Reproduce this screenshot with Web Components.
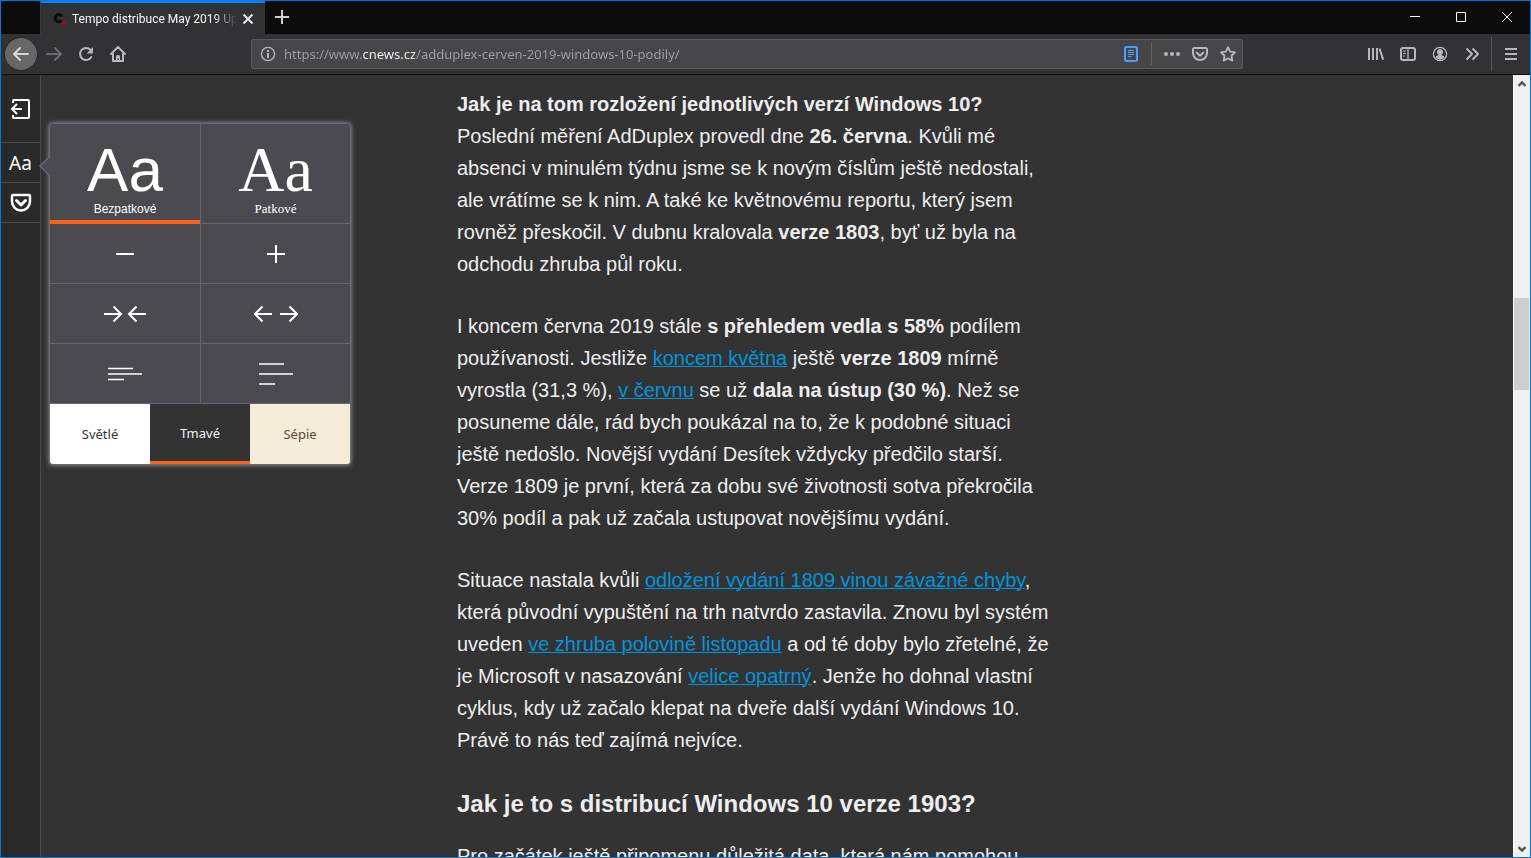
<!DOCTYPE html>
<html lang="cs">
<head>
<meta charset="utf-8">
<title>Tempo distribuce May 2019 Update</title>
<style>
body { margin: 0; background: #333; font-family: "Noto Sans", "Open Sans", sans-serif; }
</style>
</head>
<body>
<browser-window>
  <tab-strip slot="tabs"><browser-tab>Tempo distribuce May 2019 Update</browser-tab></tab-strip>
  <nav-toolbar slot="toolbar"></nav-toolbar>
  <reader-sidebar slot="content"></reader-sidebar>
  <reader-article slot="content"></reader-article>
  <page-scrollbar slot="content"></page-scrollbar>
</browser-window>

<script>
const define = (name, html, setup) => {
  const template = document.createElement('template');
  template.innerHTML = '<style>*{box-sizing:border-box}</style>' + html;
  customElements.define(name, class extends HTMLElement {
    constructor() {
      super();
      this.attachShadow({ mode: 'open' }).append(template.content.cloneNode(true));
    }
    connectedCallback() { if (setup) setup(this, this.shadowRoot); }
  });
};

const line = (w, body, extra = '') => `<g fill="none" stroke="currentColor" stroke-width="${w}" ${extra}>${body}</g>`;
const round = 'stroke-linecap="round" stroke-linejoin="round"';
const ICONS = {
  back: [16, 16, line(2, '<path d="M15 8H1.5M7 2L1 8l6 6"/>', round)],
  forward: [16, 16, line(2, '<path d="M1 8h13.5M9 2l6 6-6 6"/>', round)],
  reload: [16, 16, line(2, '<path d="M13.3 11A6 6 0 1 1 12.6 4"/>', 'stroke-linecap="round"') + '<path d="M15 1v6.5H8.6z" fill="currentColor"/>'],
  home: [16, 16, line(2, '<path d="M1 8l7-7 7 7M3 8v7h10V8"/>', round) + '<path d="M6 15v-4.5a1.5 1.5 0 0 1 1.5-1.5h1A1.5 1.5 0 0 1 10 10.500V15H8.700v-2.500H7.500V15z" fill="currentColor"/>'],
  info: [16, 16, line(1.3, '<circle cx="8" cy="8" r="6.600"/>') + '<path d="M7 7h2v5H7zM7 4h2v2H7z" fill="currentColor"/>'],
  reader: [16, 16, line(2, '<rect x="2" y="1" width="12" height="14" rx="1.500"/>') + line(1, '<path d="M5 4.500h6M5 6.500h6M5 8.500h6M5 10.500h3.500"/>')],
  dots: [18, 16, '<g fill="currentColor"><circle cx="3" cy="8" r="2"/><circle cx="9" cy="8" r="2"/><circle cx="15" cy="8" r="2"/></g>'],
  pocket: [16, 16, line(2, '<path d="M2.500 2h11a1.500 1.500 0 0 1 1.500 1.500V7A7 7 0 0 1 1 7V3.500A1.500 1.500 0 0 1 2.500 2zM4.700 6.500L8 9.700l3.300-3.200"/>', round)],
  star: [16, 16, line(1.8, '<path d="M8 1.200l2.100 4.400 4.900.7-3.500 3.400.8 4.900L8 12.300l-4.300 2.300.8-4.900L1 6.300l4.900-.7z"/>', 'stroke-linejoin="round"')],
  library: [16, 16, line(2, '<path d="M1 2v12M5 2v12M9 2v12M11.500 2.500l3.700 11.300"/>')],
  sidebar: [16, 16, line(2, '<rect x="1" y="2" width="14" height="12" rx="2"/><path d="M8 2v12" stroke-width="1.300"/><path d="M3 5h3M3 7.500h3M3 10h2" stroke-width="1"/>')],
  account: [16, 16, line(1.3, '<circle cx="8" cy="8" r="6.600"/>') + '<path d="M8 3a3 3 0 0 1 1.800 5.400V9.500c2.200.2 2.700 1 2.700 1.800A5.500 5.500 0 0 1 3.500 11.300c0-.8.500-1.600 2.700-1.800V8.400A3 3 0 0 1 8 3z" fill="currentColor"/>'],
  overflow: [16, 16, line(2, '<path d="M2.500 2.500L8 8l-5.500 5.500M8.500 2.500L14 8l-5.500 5.500"/>', 'stroke-linejoin="round"')],
  menu: [16, 16, line(2, '<path d="M2 3h12M2 8h12M2 13h12"/>')],
  plus: [14, 14, line(2, '<path d="M7 0v14M0 7h14"/>')],
  cross: [12, 12, line(2, '<path d="M1.500 1.500l9 9M10.500 1.500l-9 9"/>')],
  minimize: [10, 10, '<path d="M0 4h10v1H0z" fill="currentColor"/>'],
  maximize: [10, 10, line(1, '<path d="M.5.5h9v9h-9z"/>')],
  quit: [10, 10, line(1, '<path d="M0 0l10 10M10 0L0 10"/>')],
  exit: [22, 22, line(2, '<path d="M3 5V3a1 1 0 0 1 1-1h14a1 1 0 0 1 1 1v16a1 1 0 0 1-1 1H4a1 1 0 0 1-1-1v-2M12 11H2M7 6l-5 5 5 5"/>')],
  pocketLarge: [22, 20, line(2.500, '<path d="M3 2h16a1 1 0 0 1 1 1v5.500a9 9 0 0 1-18 0V3a1 1 0 0 1 1-1z"/><path d="M6.500 7.500L11 12l4.500-4.500" stroke-width="3"/>', round)],
  smaller: [18, 18, line(2, '<path d="M0 9h18"/>')],
  larger: [18, 18, line(2, '<path d="M0 9h18M9 0v18"/>')],
  narrower: [42, 18, line(2, '<path d="M0 9h17M9.500 1.500L17 9l-7.500 7.500M42 9H25M32.500 1.500L25 9l7.500 7.500"/>')],
  wider: [44, 18, line(2, '<path d="M18 9H1M8.500 1.500L1 9l7.500 7.500M26 9h17M35.500 1.500L43 9l-7.500 7.500"/>')],
  denser: [34, 22, line(1.6, '<path d="M0 5.500h25M0 11h34M0 16.500h16"/>')],
  looser: [34, 22, line(1.6, '<path d="M0 1h25M0 11h34M0 21h16"/>')],
  up: [8, 8, line(2.4, '<path d="M.5 6L4 2.500 7.500 6"/>')],
  down: [8, 8, line(2.4, '<path d="M.5 2L4 5.500 7.500 2"/>')]
};

define('ui-icon', '<style>:host{display:flex;flex:none}svg{display:block}</style>', (host, root) => {
  const [w, h, body] = ICONS[host.getAttribute('name')];
  const box = document.createElement('div');
  box.innerHTML = `<svg width="${w}" height="${h}" viewBox="0 0 ${w} ${h}" aria-hidden="true">${body}</svg>`;
  root.append(box);
});

define('tool-button', `
<style>
:host { display: flex; flex: none; width: 32px; height: 32px; color: #b8b8b9; }
button { display: flex; align-items: center; justify-content: center; width: 100%; height: 100%; padding: 0; border: 0; border-radius: inherit; background: none; color: inherit; font: inherit; }
</style>
<button type="button"><slot></slot></button>`, (host, root) => {
  root.querySelector('button').setAttribute('aria-label', host.getAttribute('label'));
});

define('browser-window', `
<style>
:host { display: flex; flex-direction: column; height: 100vh; box-sizing: border-box; border: 1px solid #0078d7; background: #333; overflow: hidden; }
main { display: flex; flex: 1; min-height: 0; }
</style>
<slot name="tabs"></slot><slot name="toolbar"></slot>
<main><slot name="content"></slot></main>`);

define('tab-strip', `
<style>
:host { display: flex; flex: none; height: 33px; box-sizing: border-box; background: #0c0c0d; border-bottom: 1px solid #09090a; padding-left: 39px; }
.gap { flex: 1; }
.win { width: 46px; color: #fff; }
.new { width: 34px; color: #d0d0d0; }
::slotted(browser-tab) { margin-bottom: -1px; }
</style>
<slot></slot>
<tool-button class="new" label="Nový panel"><ui-icon name="plus"></ui-icon></tool-button>
<span class="gap"></span>
<tool-button class="win" label="Minimalizovat"><ui-icon name="minimize"></ui-icon></tool-button>
<tool-button class="win" label="Maximalizovat"><ui-icon name="maximize"></ui-icon></tool-button>
<tool-button class="win" label="Zavřít"><ui-icon name="quit"></ui-icon></tool-button>`);

define('browser-tab', `
<style>
:host { display: flex; align-items: center; box-sizing: border-box; width: 225px; background: #323234; border-top: 2px solid #0a84ff; border-left: 1px solid #3c3c3e; padding: 0 11px; color: #f9f9fa; font: 12px Roboto, "Noto Sans", sans-serif; }
svg { flex: none; margin-right: 5px; }
.title { flex: 1; overflow: hidden; white-space: nowrap; line-height: 18px; -webkit-mask-image: linear-gradient(to left, transparent, #000 24px); mask-image: linear-gradient(to left, transparent, #000 24px); }
.close { width: 12px; height: 18px; color: #e6e6e6; margin-left: 5px; }
</style>
<svg width="15" height="14" viewBox="0 0 15 14" aria-hidden="true"><path d="M10 4.500A3.600 3.600 0 1 0 9.500 8.500" fill="none" stroke="#0c0c0d" stroke-width="3"/><circle cx="12" cy="11" r="2.300" fill="#a3071c"/></svg>
<span class="title"><slot></slot></span>
<tool-button class="close" label="Zavřít panel"><ui-icon name="cross"></ui-icon></tool-button>`);

define('nav-toolbar', `
<style>
:host { display: flex; align-items: center; flex: none; height: 41px; box-sizing: border-box; background: #323234; border-bottom: 1px solid #0c0c0d; padding: 0 3px 0 4px; }
.back { margin-right: 1px; border-radius: 50%; background: #676768; color: #d8d8d9; box-shadow: 0 0 0 1px #29292b; }
.off { color: #6c6c6e; }
.group { display: flex; }
address-bar { flex: 1; margin: 0 117px; }
.sep { width: 1px; height: 34px; background: #555557; margin: 0 3px; }
</style>
<div class="group">
<tool-button class="back" label="Zpět"><ui-icon name="back"></ui-icon></tool-button>
<tool-button class="off" label="Vpřed"><ui-icon name="forward"></ui-icon></tool-button>
<tool-button label="Obnovit"><ui-icon name="reload"></ui-icon></tool-button>
<tool-button label="Domů"><ui-icon name="home"></ui-icon></tool-button>
</div>
<address-bar></address-bar>
<div class="group">
<tool-button label="Knihovna"><ui-icon name="library"></ui-icon></tool-button>
<tool-button label="Postranní lišta"><ui-icon name="sidebar"></ui-icon></tool-button>
<tool-button label="Účet"><ui-icon name="account"></ui-icon></tool-button>
<tool-button label="Další nástroje"><ui-icon name="overflow"></ui-icon></tool-button>
</div>
<span class="sep"></span>
<tool-button label="Nabídka"><ui-icon name="menu"></ui-icon></tool-button>`);

define('address-bar', `
<style>
:host { display: flex; align-items: center; box-sizing: border-box; height: 30px; min-width: 0; background: #474749; border: 1px solid #5a5a5c; border-radius: 2px; }
tool-button { width: 28px; height: 28px; }
.info { width: 32px; }
.reader { color: #45a1ff; }
.sep { width: 1px; height: 22px; background: #626264; margin: 0 6px; }
input { flex: 1; min-width: 0; height: 28px; padding: 0; border: 0; outline: 0; font: 13px/28px "Noto Sans", "Open Sans", sans-serif;
  color: #a0a0a2; -webkit-text-fill-color: transparent;
  background: linear-gradient(to right, #a0a0a2 78px, #f9f9fa 78px 131px, #a0a0a2 131px); -webkit-background-clip: text; background-clip: text; }
</style>
<tool-button class="info" label="Informace o stránce"><ui-icon name="info"></ui-icon></tool-button>
<input type="text" aria-label="Adresa" value="https://www.cnews.cz/adduplex-cerven-2019-windows-10-podily/">
<tool-button class="reader" label="Zobrazení čtečky"><ui-icon name="reader"></ui-icon></tool-button>
<span class="sep"></span>
<tool-button label="Akce stránky"><ui-icon name="dots"></ui-icon></tool-button>
<tool-button label="Uložit do Pocketu"><ui-icon name="pocket"></ui-icon></tool-button>
<tool-button label="Přidat záložku"><ui-icon name="star"></ui-icon></tool-button>`);

define('reader-sidebar', `
<style>
:host { display: block; position: relative; z-index: 1; flex: none; width: 40px; box-sizing: border-box; background: #2a2a2b; border-right: 1px solid #4a4a4b; }
tool-button { width: 39px; height: 40px; box-sizing: border-box; border-bottom: 1px solid #4a4a4b; color: #fff; font-size: 19px; }
.first { height: 68px; }
reader-settings { position: absolute; left: 48px; top: 48px; }
</style>
<tool-button class="first" label="Zavřít čtečku"><ui-icon name="exit"></ui-icon></tool-button>
<tool-button label="Nastavení písma">Aa</tool-button>
<tool-button label="Uložit do Pocketu"><ui-icon name="pocketLarge"></ui-icon></tool-button>
<reader-settings></reader-settings>`);

define('reader-settings', `
<style>
:host { display: block; box-sizing: border-box; width: 302px; border: 1px solid #6a6a6e; border-radius: 4px; background: #4a4a50; box-shadow: 0 0 4px #a0a0a4; }
.arrow { position: absolute; left: -11px; top: 31px; }
.grid { display: grid; grid-template-columns: 1fr 1fr; grid-template-rows: 100px; grid-auto-rows: 60px; }
button { display: flex; align-items: center; justify-content: center; margin: 0; padding: 0; border: 0; background: none; color: #fff; font: 13px/18px "Noto Sans", "Open Sans", sans-serif; }
.grid button { border-bottom: 1px solid #66666b; }
.grid button:nth-child(even) { border-left: 1px solid #66666b; }
.grid .face { flex-direction: column; justify-content: flex-start; padding-top: 14px; }
.face b { font-weight: 400; font-size: 64px; line-height: 64px; }
.face span { line-height: 14px; }
.grid .sans { border-bottom: 4px solid #ff6219; font-family: "Liberation Sans", sans-serif; font-size: 12px; }
.grid .serif { font-family: "Liberation Serif", serif; font-size: 13px; }
.grid .sans b { font-size: 62px; }
.schemes { display: grid; grid-template-columns: 1fr 1fr 1fr; height: 60px; }
.light { background: #fff; color: #333; border-bottom-left-radius: 3px; }
.dark { background: #333; color: #eee; border-bottom: 3px solid #ff6219; }
.sepia { background: #f4ecd8; color: #5b4636; border-bottom-right-radius: 3px; }
</style>
<svg class="arrow" width="12" height="22" viewBox="0 0 12 22" aria-hidden="true"><path d="M12 0L1 11l11 11z" fill="#4a4a50"/><path d="M11 1L1 11l10 10" fill="none" stroke="#6a6a6e" stroke-width="1.500"/></svg>
<div class="grid">
<button type="button" class="face sans" aria-pressed="true"><b>Aa</b><span>Bezpatkové</span></button>
<button type="button" class="face serif" aria-pressed="false"><b>Aa</b><span>Patkové</span></button>
<button type="button" aria-label="Zmenšit písmo"><ui-icon name="smaller"></ui-icon></button>
<button type="button" aria-label="Zvětšit písmo"><ui-icon name="larger"></ui-icon></button>
<button type="button" aria-label="Zúžit obsah"><ui-icon name="narrower"></ui-icon></button>
<button type="button" aria-label="Rozšířit obsah"><ui-icon name="wider"></ui-icon></button>
<button type="button" aria-label="Zmenšit řádkování"><ui-icon name="denser"></ui-icon></button>
<button type="button" aria-label="Zvětšit řádkování"><ui-icon name="looser"></ui-icon></button>
</div>
<div class="schemes">
<button type="button" class="light" aria-pressed="false">Světlé</button>
<button type="button" class="dark" aria-pressed="true">Tmavé</button>
<button type="button" class="sepia" aria-pressed="false">Sépie</button>
</div>`);

define('reader-article', `
<style>
:host { display: block; flex: 1; min-width: 0; min-height: 0; overflow: hidden; box-sizing: border-box; padding: 13px 40px 0 0; color: #eee; font: 20px/32px "Liberation Sans", Arial, sans-serif; }
article { max-width: 600px; margin: 0 auto; }
p { margin: 0 0 30px; }
h2 { margin: 0 0 18px; font-size: 24px; line-height: 36px; }
a { color: #0095dd; text-decoration-thickness: 1px; }
</style>
<article>
<p><strong>Jak je na tom rozložení jednotlivých verzí Windows 10?</strong><br>Poslední měření AdDuplex provedl dne <strong>26. června</strong>. Kvůli mé absenci v minulém týdnu jsme se k novým číslům ještě nedostali, ale vrátíme se k nim. A také ke květnovému reportu, který jsem rovněž přeskočil. V dubnu kralovala <strong>verze 1803</strong>, byť už byla na odchodu zhruba půl roku.</p>
<p>I koncem června 2019 stále <strong>s přehledem vedla s 58%</strong> podílem používanosti. Jestliže <a href="#kveten">koncem května</a> ještě <strong>verze 1809</strong> mírně vyrostla (31,3 %), <a href="#cerven">v červnu</a> se už <strong>dala na ústup (30 %)</strong>. Než se posuneme dále, rád bych poukázal na to, že k podobné situaci ještě nedošlo. Novější vydání Desítek vždycky předčilo starší. Verze 1809 je první, která za dobu své životnosti sotva překročila 30% podíl a pak už začala ustupovat novějšímu vydání.</p>
<p>Situace nastala kvůli <a href="#odlozeni">odložení vydání 1809 vinou závažné chyby</a>, která původní vypuštění na trh natvrdo zastavila. Znovu byl systém uveden <a href="#listopad">ve zhruba polovině listopadu</a> a od té doby bylo zřetelné, že je Microsoft v nasazování <a href="#opatrny">velice opatrný</a>. Jenže ho dohnal vlastní cyklus, kdy už začalo klepat na dveře další vydání Windows 10. Právě to nás teď zajímá nejvíce.</p>
<h2>Jak je to s distribucí Windows 10 verze 1903?</h2>
<p>Pro začátek ještě připomenu důležitá data, která nám pomohou</p>
</article>`);

define('page-scrollbar', `
<style>
:host { display: flex; flex-direction: column; flex: none; width: 17px; box-sizing: border-box; background: #f0f0f0; border-left: 1px solid #fff; }
tool-button { width: 16px; height: 17px; color: #505050; }
.before { flex: 206 0 0; }
.thumb { flex: 92 0 0; background: #cdcdcd; margin-right: 1px; }
.after { flex: 450 0 0; }
</style>
<tool-button label="Nahoru"><ui-icon name="up"></ui-icon></tool-button>
<div class="before"></div><div class="thumb"></div><div class="after"></div>
<tool-button label="Dolů"><ui-icon name="down"></ui-icon></tool-button>`);
</script>
</body>
</html>
